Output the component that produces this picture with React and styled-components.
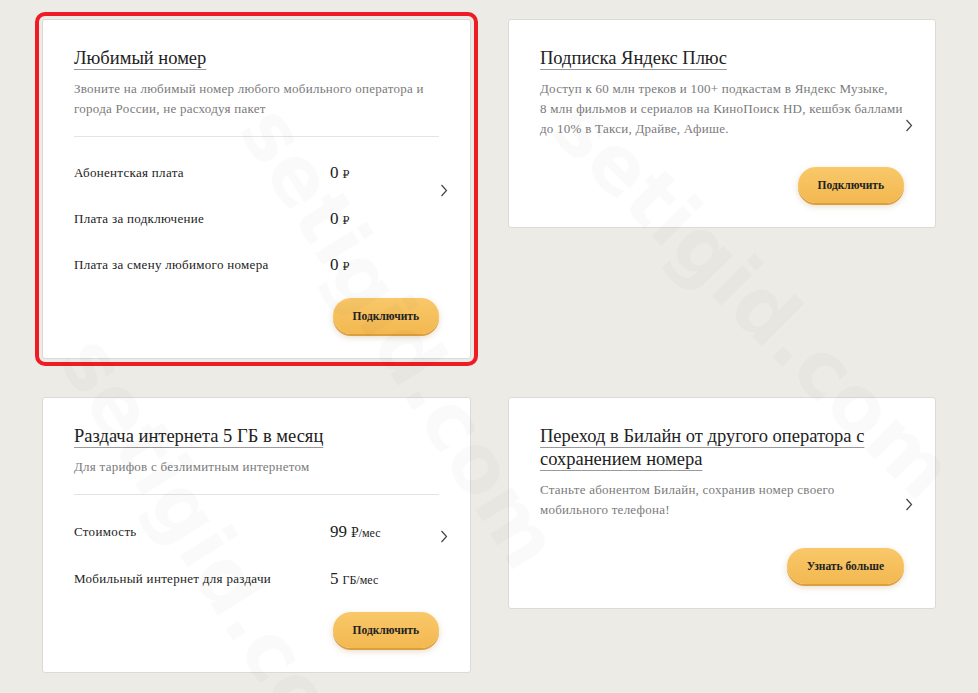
import React from 'react';
import styled, { createGlobalStyle } from 'styled-components';

// --- STYLES ---
const Global = createGlobalStyle`
  html, body {
    margin: 0;
    padding: 0;
    background: #edebe6;
  }
  body {
    font-family: 'Liberation Serif', 'DejaVu Serif', serif;
    color: #222;
    overflow: hidden;
  }
`;

const Page = styled.div`
  position: relative;
  width: 978px;
  height: 693px;
  box-sizing: border-box;
  padding: 19px 42px;
  display: grid;
  grid-template-columns: 429px 428px;
  column-gap: 37px;
  row-gap: 37px;
  align-items: start;
  overflow: hidden;
`;

const Card = styled.div`
  position: relative;
  background: #fff;
  border: 1px solid #dcdad6;
  border-radius: 3px;
  box-sizing: border-box;
  padding: 27px 22px 24px 31px;
  display: grid;
  grid-template-columns: 1fr 8px;
  column-gap: 1px;
  align-items: center;
  ${(p) => p.$marked && `
    outline: 4px solid #ee1c25;
    outline-offset: 3px;
  `}
`;

const Body = styled.div`
  display: flex;
  flex-direction: column;
`;

const Title = styled.div`
  font-size: 18.5px;
  line-height: 23px;
  color: #222;
  span {
    text-decoration: underline;
    text-decoration-color: #9a9a9a;
    text-decoration-thickness: 1px;
    text-underline-offset: 5px;
  }
`;

const Desc = styled.div`
  margin-top: 9px;
  font-size: 13px;
  letter-spacing: 0.25px;
  line-height: 20px;
  color: #7a7a7a;
  white-space: nowrap;
`;

const Divider = styled.div`
  margin-top: 17px;
  height: 1px;
  background: #e6e4e0;
`;

const Table = styled.div`
  margin-top: 13px;
  display: flex;
  flex-direction: column;
`;

const Row = styled.div`
  display: grid;
  grid-template-columns: 256px 1fr;
  align-items: center;
  height: ${(p) => p.$h || 46}px;
  font-size: 13px;
  letter-spacing: 0.3px;
  color: #222;
`;

const Value = styled.div`
  display: flex;
  align-items: baseline;
  gap: 4px;
  font-size: 17px;
  letter-spacing: 0;
  small {
    font-size: ${(p) => (p.$unit ? 12 : 11)}px;
  }
`;

const Actions = styled.div`
  display: flex;
  justify-content: flex-end;
  margin-top: ${(p) => p.$mt}px;
`;

const Button = styled.button`
  height: 36px;
  padding: 0 ${(p) => p.$px || 20}px;
  border: none;
  border-radius: 18px;
  background: linear-gradient(#f9c86a, #f3b850);
  box-shadow: 0 2px 0 #dc9f3e, 0 3px 6px rgba(150, 100, 20, 0.25);
  font-family: 'Liberation Serif', 'DejaVu Serif', serif;
  font-size: 11.5px;
  font-weight: bold;
  color: #222;
  cursor: pointer;
`;

const Chevron = styled.svg`
  width: 8px;
  height: 13px;
  display: block;
`;

const Watermark = styled.div`
  position: absolute;
  left: ${(p) => p.$x}px;
  top: ${(p) => p.$y}px;
  transform: rotate(${(p) => p.$r}deg);
  transform-origin: left top;
  font-family: 'DejaVu Sans', sans-serif;
  font-weight: bold;
  font-size: 80px;
  color: rgba(0, 0, 0, 0.018);
  white-space: nowrap;
  pointer-events: none;
  z-index: 2;
`;

// --- DATA ---
const Arrow = () => (
  <Chevron viewBox="0 0 8 13">
    <polyline points="1.5,1 6.5,6.5 1.5,12" fill="none" stroke="#444" strokeWidth="1.2" />
  </Chevron>
);

function App() {
  return (
    <>
      <Global />
      <Page>
        <Card $marked>
          <Body>
            <Title><span>Любимый номер</span></Title>
            <Desc>
              Звоните на любимый номер любого мобильного оператора и<br />
              города России, не расходуя пакет
            </Desc>
            <Divider />
            <Table>
              <Row>
                <div>Абонентская плата</div>
                <Value>0<small>₽</small></Value>
              </Row>
              <Row>
                <div>Плата за подключение</div>
                <Value>0<small>₽</small></Value>
              </Row>
              <Row>
                <div>Плата за смену любимого номера</div>
                <Value>0<small>₽</small></Value>
              </Row>
            </Table>
            <Actions $mt={10}>
              <Button>Подключить</Button>
            </Actions>
          </Body>
          <Arrow />
        </Card>

        <Card>
          <Body>
            <Title><span>Подписка Яндекс Плюс</span></Title>
            <Desc>
              Доступ к 60 млн треков и 100+ подкастам в Яндекс Музыке,<br />
              8 млн фильмов и сериалов на КиноПоиск HD, кешбэк баллами<br />
              до 10% в Такси, Драйве, Афише.
            </Desc>
            <Actions $mt={28}>
              <Button>Подключить</Button>
            </Actions>
          </Body>
          <Arrow />
        </Card>

        <Card>
          <Body>
            <Title><span>Раздача интернета 5 ГБ в месяц</span></Title>
            <Desc>Для тарифов с безлимитным интернетом</Desc>
            <Divider />
            <Table>
              <Row $h={47}>
                <div>Стоимость</div>
                <Value $unit>99<small>₽/мес</small></Value>
              </Row>
              <Row $h={47}>
                <div>Мобильный интернет для раздачи</div>
                <Value $unit>5<small>ГБ/мес</small></Value>
              </Row>
            </Table>
            <Actions $mt={10}>
              <Button>Подключить</Button>
            </Actions>
          </Body>
          <Arrow />
        </Card>

        <Card>
          <Body>
            <Title>
              <span>Переход в Билайн от другого оператора с<br />сохранением номера</span>
            </Title>
            <Desc>
              Станьте абонентом Билайн, сохранив номер своего<br />
              мобильного телефона!
            </Desc>
            <Actions $mt={28}>
              <Button $px={20}>Узнать больше</Button>
            </Actions>
          </Body>
          <Arrow />
        </Card>

        <Watermark $x={300} $y={90} $r={58}>setigid.com</Watermark>
        <Watermark $x={600} $y={80} $r={45}>setigid.com</Watermark>
        <Watermark $x={120} $y={320} $r={58}>setigid.com</Watermark>
      </Page>
    </>
  );
}

export default App;
